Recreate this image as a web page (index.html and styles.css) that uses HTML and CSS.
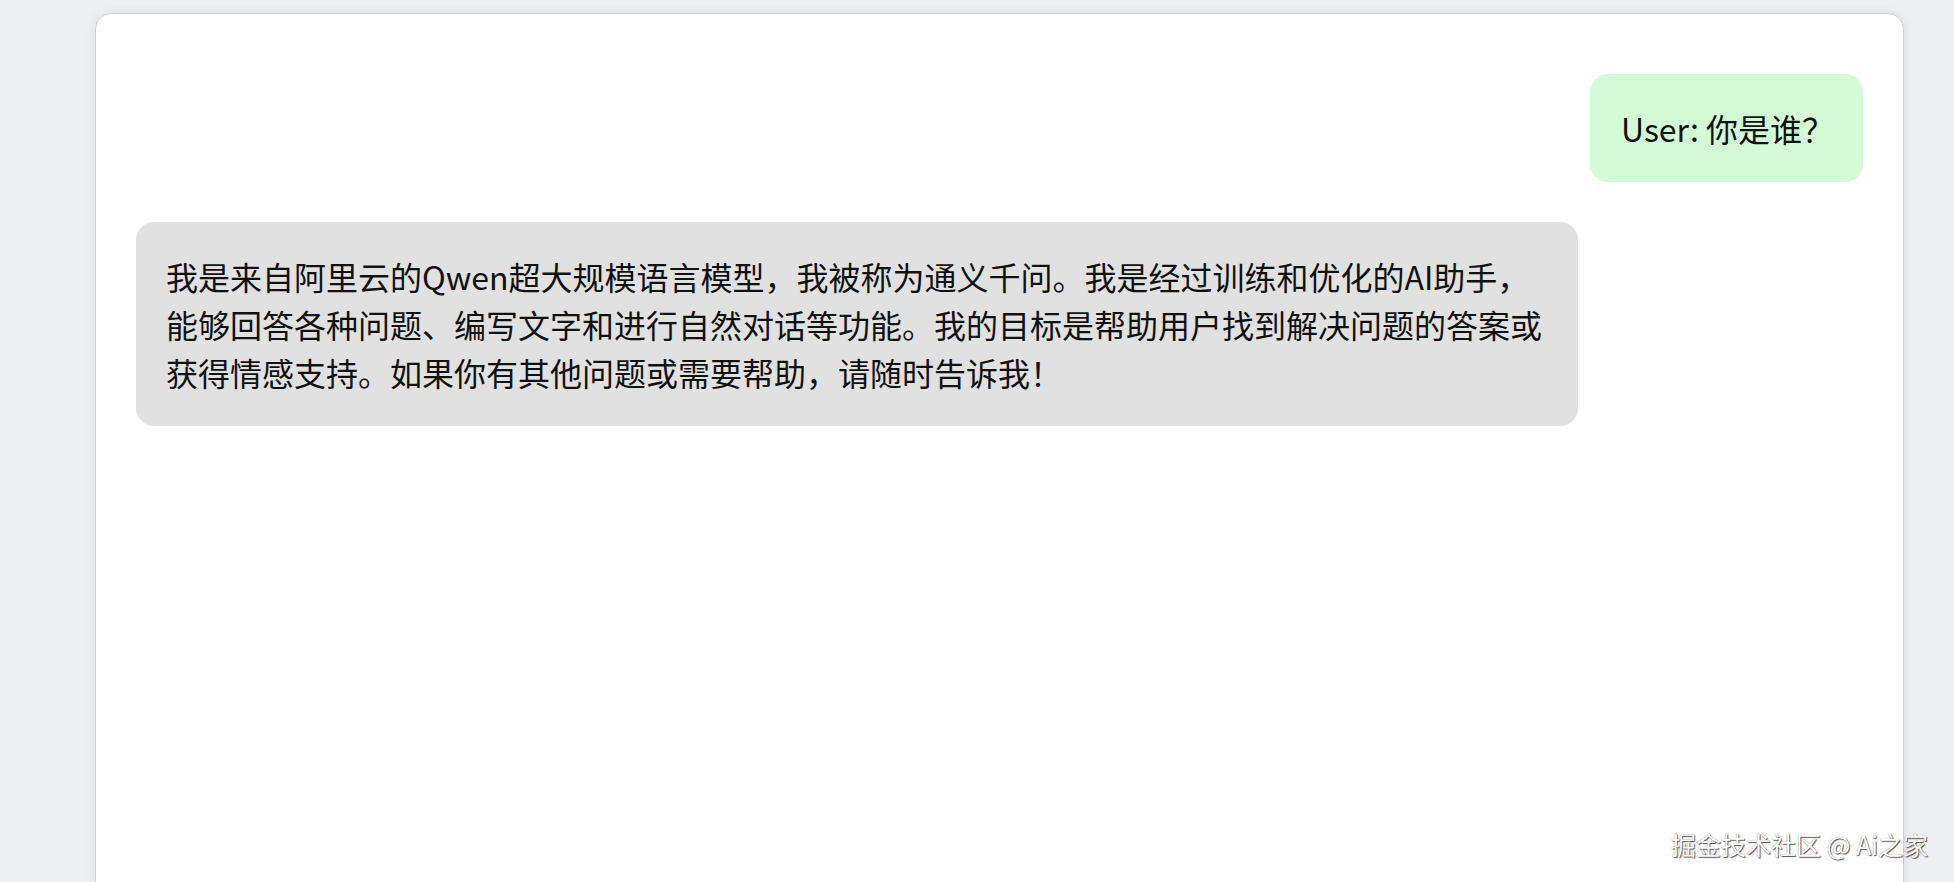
FILE: index.html
```html
<!DOCTYPE html>
<html lang="zh-CN">
<head>
    <meta charset="UTF-8">
    <meta name="viewport" content="width=device-width, initial-scale=1.0">
    <title>Qwen Chat</title>
    <link rel="stylesheet" href="styles.css">
</head>
<body>

<div class="chat-container">
    <div class="message user-message">User: 你是谁？</div>
    <div class="message bot-message">我是来自阿里云的Qwen超大规模语言模型，我被称为通义千问。我是经过训练和优化的AI助手，<br>能够回答各种问题、编写文字和进行自然对话等功能。我的目标是帮助用户找到解决问题的答案或<br>获得情感支持。如果你有其他问题或需要帮助，请随时告诉我！</div>
</div>

<div class="watermark">掘金技术社区 @ Ai之家</div>

</body>
</html>
```

FILE: styles.css
```css
body {
    margin: 0;
    background-color: #eff0f3;
    font-family: "Noto Sans CJK SC", sans-serif;
    overflow: hidden;
}
.chat-container {
    width: 1727px;
    height: 900px;
    margin: 13px 0 0 95px;
    padding: 40px;
    background-color: #fff;
    border: 1px solid #d0d0d3;
    border-radius: 16px;
    box-shadow: 0 0 12px rgba(0, 0, 0, 0.08);
    display: flex;
    flex-direction: column;
    box-sizing: content-box;
}
.message {
    margin: 20px 0;
    padding: 30px;
    max-width: 80%;
    border-radius: 18px;
    font-size: 32px;
    line-height: 1.5;
    color: #111;
}
.user-message {
    align-self: flex-end;
    background-color: #d3fbd5;
    padding-left: 31px;
    padding-right: 29px;
}
.bot-message {
    align-self: flex-start;
    width: 80%;
    background-color: #e1e1e1;
    white-space: nowrap;
}
.watermark {
    position: absolute;
    right: 26px;
    bottom: 20px;
    font-size: 25px;
    color: #fff;
    text-shadow: 1px 1px 1px #555, 0 0 1px #777;
}
```
